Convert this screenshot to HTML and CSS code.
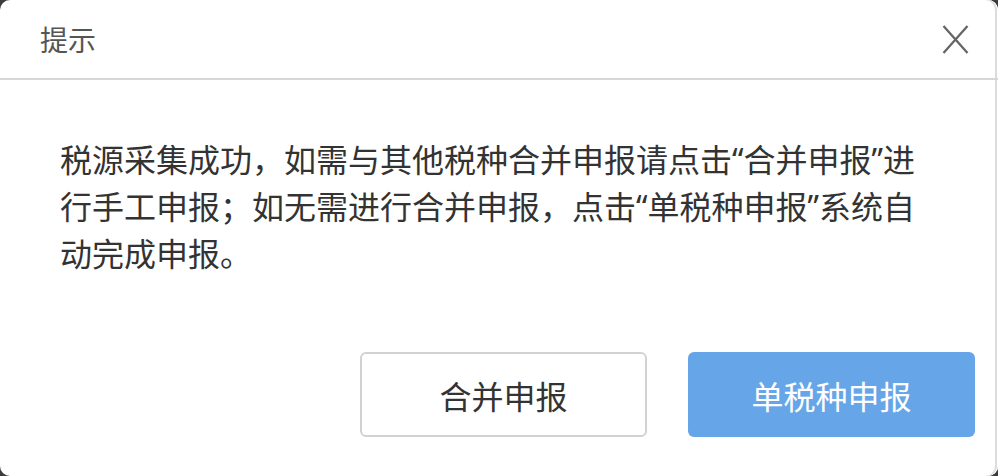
FILE: index.html
```html
<!DOCTYPE html>
<html lang="zh-CN">
<head>
    <meta charset="UTF-8">
    <meta name="viewport" content="width=device-width, initial-scale=1.0">
    <title>提示</title>
    <link rel="stylesheet" href="styles.css">
</head>
<body>
    <div class="dialog">
        <div class="dialog-header">
            <span class="dialog-title">提示</span>
            <button class="dialog-close" aria-label="关闭">
                <svg width="27" height="29" viewBox="0 0 27 29">
                    <path d="M1.5 1 L25.5 28 M25.5 1 L1.5 28" stroke="#666" stroke-width="2.3" fill="none"/>
                </svg>
            </button>
        </div>
        <div class="dialog-body">
            <p>税源采集成功，如需与其他税种合并申报请点击“合并申报”进行手工申报；如无需进行合并申报，点击“单税种申报”系统自动完成申报。</p>
        </div>
        <div class="dialog-footer">
            <button class="btn btn-default">合并申报</button>
            <button class="btn btn-primary">单税种申报</button>
        </div>
    </div>
</body>
</html>
```

FILE: styles.css
```css
body {
    margin: 0;
    padding: 0;
    background: #3c3c3c;
    font-family: "Noto Sans", "Noto Sans CJK SC", sans-serif;
}

.dialog {
    width: 998px;
    height: 476px;
    box-sizing: border-box;
    background: #fff;
    border-radius: 10px;
    box-shadow: inset -1px 0 0 #fff, inset -3px 0 0 #dcdcdc;
    display: flex;
    flex-direction: column;
}

.dialog-header {
    height: 78px;
    flex-shrink: 0;
    display: flex;
    align-items: center;
    justify-content: space-between;
    padding: 0 29px 0 40px;
    border-bottom: 2px solid #d6d6d6;
}

.dialog-title {
    font-size: 28px;
    color: #555;
}

.dialog-close {
    background: none;
    border: none;
    padding: 0;
    margin-top: 1px;
    cursor: pointer;
    display: flex;
}

.dialog-body {
    padding: 56px 60px 0 60px;
}

.dialog-body p {
    margin: 0;
    font-size: 32px;
    line-height: 47px;
    color: #333;
}

.dialog-footer {
    margin-top: auto;
    display: flex;
    justify-content: flex-end;
    gap: 41px;
    padding: 0 23px 39px 0;
}

.btn {
    width: 287px;
    height: 85px;
    box-sizing: border-box;
    border-radius: 6px;
    font-family: inherit;
    font-size: 32px;
    cursor: pointer;
}

.btn-default {
    background: #fff;
    border: 2px solid #d2d2d2;
    color: #333;
}

.btn-primary {
    background: #66a6e8;
    border: none;
    color: #fff;
}
```
